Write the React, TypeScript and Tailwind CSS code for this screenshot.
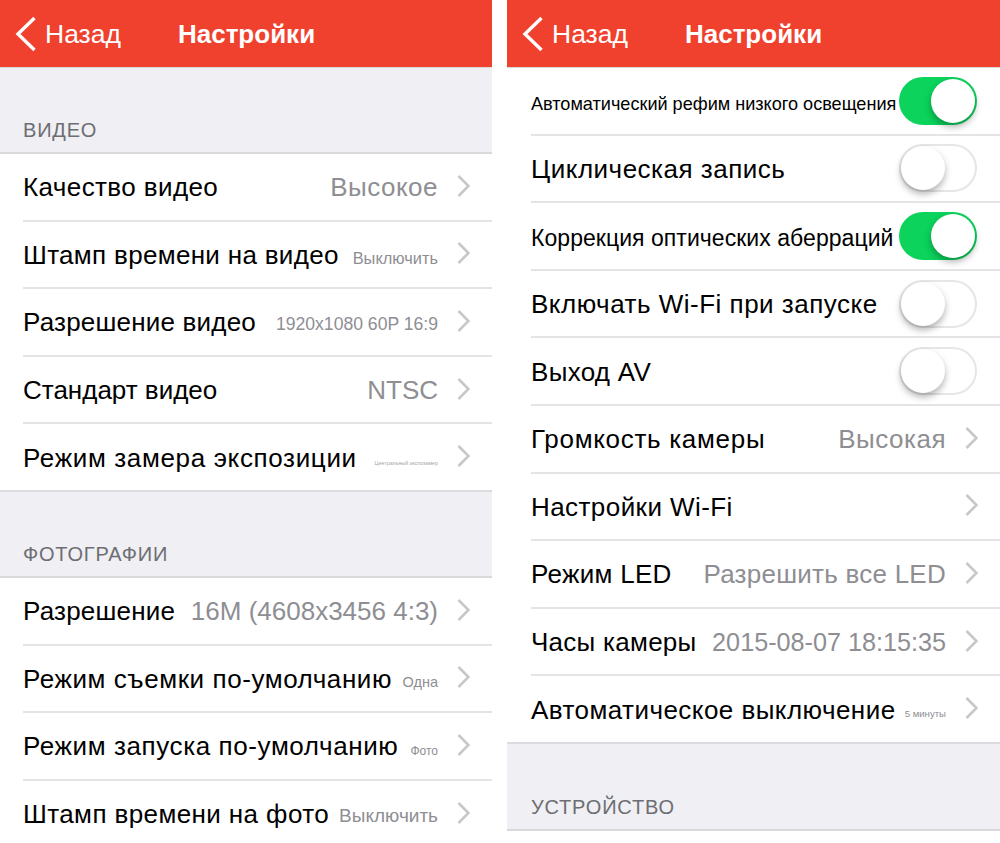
type Item = {
  label: string;
  labelClass: string;
  value?: string;
  valueClass?: string;
  toggle?: boolean;
};

const VIDEO: Item[] = [
  { label: 'Качество видео', labelClass: 'text-[26px] tracking-[0.4px] pt-[2px]', value: 'Высокое', valueClass: 'text-[26px] tracking-[0.5px] pt-[2px]' },
  { label: 'Штамп времени на видео', labelClass: 'text-[26px] tracking-[0.32px] pt-[2px]', value: 'Выключить', valueClass: 'text-[16.4px] pt-[8px]' },
  { label: 'Разрешение видео', labelClass: 'text-[26px] tracking-[0.2px] pt-[2px]', value: '1920x1080 60P 16:9', valueClass: 'text-[17.6px] pt-[5px]' },
  { label: 'Стандарт видео', labelClass: 'text-[26px] pt-[2px]', value: 'NTSC', valueClass: 'text-[26px] pt-[2px]' },
  { label: 'Режим замера экспозиции', labelClass: 'text-[26px] tracking-[0.65px] pt-[2px]', value: 'Центральный экспозамер', valueClass: 'text-[5.3px] pt-[14px] opacity-80' },
];

const PHOTO: Item[] = [
  { label: 'Разрешение', labelClass: 'text-[26px] tracking-[0.2px] pt-[2px]', value: '16M (4608x3456 4:3)', valueClass: 'text-[26px] pt-[2px]' },
  { label: 'Режим съемки по-умолчанию', labelClass: 'text-[26px] tracking-[0.57px] pt-[2px]', value: 'Одна', valueClass: 'text-[14.5px] pt-[9px]' },
  { label: 'Режим запуска по-умолчанию', labelClass: 'text-[26px] tracking-[0.6px] pt-[2px]', value: 'Фото', valueClass: 'text-[12px] pt-[10px]' },
  { label: 'Штамп времени на фото', labelClass: 'text-[26px] tracking-[0.4px] pt-[2px]', value: 'Выключить', valueClass: 'text-[19px] pt-[5px]' },
];

const DEVICE: Item[] = [
  { label: 'Автоматический рефим низкого освещения', labelClass: 'text-[18.1px] pt-[8px]', toggle: true },
  { label: 'Циклическая запись', labelClass: 'text-[26px] tracking-[0.5px] pt-[2px]', toggle: false },
  { label: 'Коррекция оптических аберраций', labelClass: 'text-[23px] tracking-[0.05px] pt-[4px]', toggle: true },
  { label: 'Включать Wi-Fi при запуске', labelClass: 'text-[26px] tracking-[0.5px] pt-[2px]', toggle: false },
  { label: 'Выход AV', labelClass: 'text-[26px] tracking-[0.3px] pt-[2px]', toggle: false },
  { label: 'Громкость камеры', labelClass: 'text-[26px] tracking-[0.7px] pt-[2px]', value: 'Высокая', valueClass: 'text-[26px] tracking-[0.5px] pt-[2px]' },
  { label: 'Настройки Wi-Fi', labelClass: 'text-[26px] tracking-[0.43px] pt-[2px]' },
  { label: 'Режим LED', labelClass: 'text-[26px] tracking-[0.3px] pt-[2px]', value: 'Разрешить все LED', valueClass: 'text-[26px] tracking-[0.25px] pt-[2px]' },
  { label: 'Часы камеры', labelClass: 'text-[26px] tracking-[0.27px] pt-[2px]', value: '2015-08-07 18:15:35', valueClass: 'text-[25.2px] pt-[2px]' },
  { label: 'Автоматическое выключение', labelClass: 'text-[26px] tracking-[0.45px] pt-[2px]', value: '5 минуты', valueClass: 'text-[9.6px] pt-[11px]' },
];

function Header() {
  return (
    <div className="h-[68px] shrink-0 bg-[#ef412d] flex items-center text-white border-b border-[#d9d9d9]">
      <svg viewBox="0 0 22 36" className="ml-[15px] w-[22px] h-[36px] shrink-0" fill="none" stroke="white" strokeWidth="3.4">
        <path d="M19.5 2L3 18l16.5 16" />
      </svg>
      <span className="text-[26.5px] ml-[8px] pt-[2px]">Назад</span>
      <span className="text-[26px] font-bold ml-[57px] pt-[2px]">Настройки</span>
    </div>
  );
}

function Toggle({ on }: { on: boolean }) {
  return (
    <div
      className={
        on
          ? 'w-[78px] h-[48px] rounded-full bg-[#0bd35c] flex justify-end items-center pr-[2px] shrink-0'
          : 'w-[78px] h-[48px] rounded-full bg-white border-2 border-[#e6e6e6] flex justify-start items-center shrink-0'
      }
    >
      <div className="w-[44px] h-[44px] rounded-full bg-white shadow-[0_4px_7px_rgba(0,0,0,0.3)]" />
    </div>
  );
}

function Row({ item, last, inset }: { item: Item; last?: boolean; inset?: boolean }) {
  return (
    <div className={`h-[67.6px] shrink-0 ${inset ? 'pl-[24px]' : 'pl-[23px]'} ${last ? 'border-b-2 border-[#dcdce0]' : ''}`}>
      <div className={`h-full flex items-center ${item.toggle !== undefined ? 'pr-[23px]' : 'pr-[22px]'} ${last ? '' : 'border-b-2 border-[#e4e4e6]'}`}>
        <span className={`whitespace-nowrap text-black ${item.labelClass}`}>{item.label}</span>
        <div className="flex-1" />
        {item.toggle !== undefined ? (
          <Toggle on={item.toggle} />
        ) : (
          <>
            {item.value && (
              <span className={`whitespace-nowrap text-[#8e8e93] ${item.valueClass}`}>{item.value}</span>
            )}
            <svg viewBox="0 0 13 24" className="w-[13px] h-[24px] ml-[19px] shrink-0 mb-[2px]" fill="none" stroke="#c7c7cc" strokeWidth="2.6">
              <path d="M1.5 2l10 10-10 10" />
            </svg>
          </>
        )}
      </div>
    </div>
  );
}

function SectionTitle({ title, height, inset }: { title: string; height: string; inset?: boolean }) {
  return (
    <div className={`${height} shrink-0 bg-[#efeff4] border-b-2 border-[#d9d9dc] flex items-end ${inset ? 'pl-[24px]' : 'pl-[23px]'} pb-[10px]`}>
      <span className="text-[20px] tracking-[0.8px] text-[#6d6d72] leading-[24px]">{title}</span>
    </div>
  );
}

export default function App() {
  return (
    <div className="w-[1000px] h-[843px] overflow-hidden bg-white flex gap-[15px] font-['Liberation_Sans',sans-serif]">
      <div className="w-[492px] h-full flex flex-col bg-white overflow-hidden">
        <Header />
        <SectionTitle title="ВИДЕО" height="h-[86px]" />
        {VIDEO.map((item, i) => (
          <Row key={item.label} item={item} last={i === VIDEO.length - 1} />
        ))}
        <SectionTitle title="ФОТОГРАФИИ" height="h-[86px]" />
        {PHOTO.map((item) => (
          <Row key={item.label} item={item} />
        ))}
      </div>
      <div className="w-[493px] h-full flex flex-col bg-white overflow-hidden">
        <Header />
        {DEVICE.map((item, i) => (
          <Row key={item.label} item={item} inset last={i === DEVICE.length - 1} />
        ))}
        <SectionTitle title="УСТРОЙСТВО" height="h-[87px]" inset />
      </div>
    </div>
  );
}
